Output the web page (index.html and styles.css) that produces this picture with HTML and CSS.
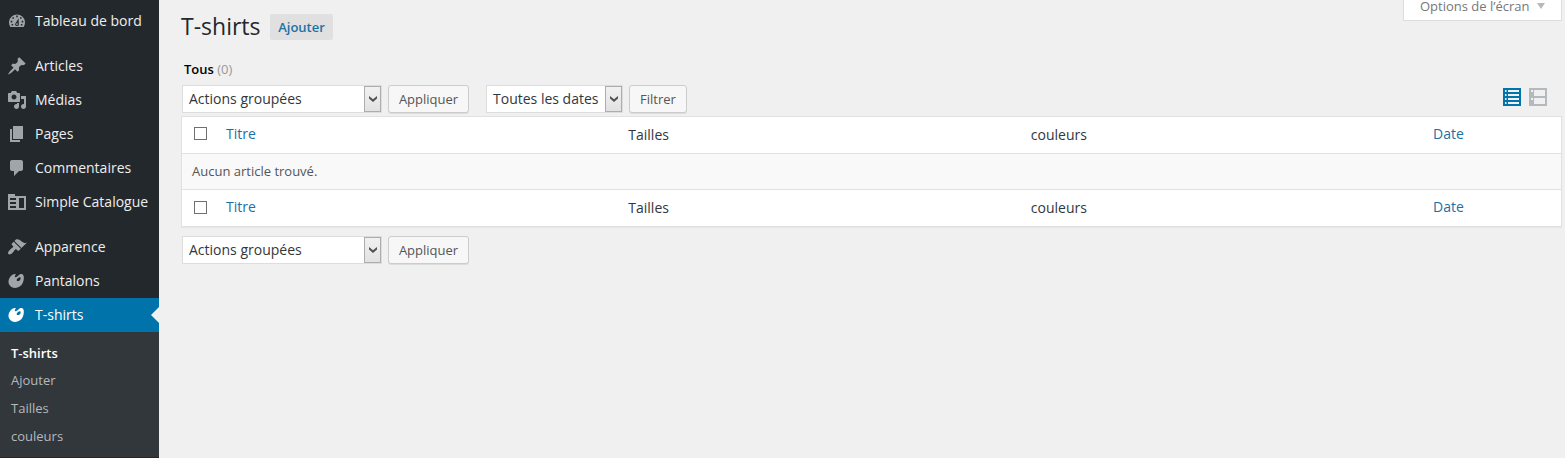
FILE: index.html
```html
<!DOCTYPE html>
<html lang="fr">
<head>
<meta charset="utf-8">
<title>T-shirts</title>
<link rel="stylesheet" href="styles.css">
</head>
<body>
<nav class="sidebar">
  <a class="item"><svg class="icon" viewBox="0 0 20 20"><path fill-rule="evenodd" d="M3.4 16h13.2A8 8 0 1 0 3.4 16zM9.2 4.6h1.6v1.6H9.2zM5.4 6.2H7v1.6H5.4zM13 6.2h1.6v1.6H13zM3.7 9.8h1.6v1.6H3.7zM14.7 9.8h1.6v1.6h-1.6zM4.6 13h1.6v1.4H4.6zM13.8 13h1.6v1.4h-1.6zM11.6 7.3l.2 5.7a1.8 1.8 0 1 1-3.4-.6zM10 12.2a.9.9 0 1 0 0 1.8.9.9 0 0 0 0-1.8z"/></svg>Tableau de bord</a>
  <a class="item spaced"><svg class="icon" viewBox="0 0 20 20"><path d="M10.44 3.02l1.82-1.82 6.36 6.35-1.83 1.82c-1.05-.68-2.48-.57-3.41.36l-.75.75c-.92.93-1.04 2.35-.35 3.41l-1.83 1.82-2.41-2.41-2.8 2.79c-.42.42-3.38 2.71-3.8 2.29s1.86-3.39 2.28-3.81l2.79-2.79L4.1 9.36l1.83-1.82c1.05.69 2.48.57 3.4-.36l.75-.75c.93-.92 1.05-2.35.36-3.41z"/></svg>Articles</a>
  <a class="item"><svg class="icon" viewBox="0 0 20 20"><path fill-rule="evenodd" d="M13 11V4c0-.55-.45-1-1-1h-1.67L9 1H5L3.67 3H2c-.55 0-1 .45-1 1v7c0 .55.45 1 1 1h10c.55 0 1-.45 1-1zM7 4.5c1.38 0 2.5 1.12 2.5 2.5S8.38 9.5 7 9.5 4.5 8.38 4.5 7 5.62 4.5 7 4.5zM14 6h5v10.5c0 1.38-1.12 2.5-2.5 2.5S14 17.88 14 16.5s1.12-2.5 2.5-2.5c.17 0 .34.02.5.05V9h-3V6zm-4 8.05V13h2v3.5c0 1.38-1.12 2.5-2.5 2.5S7 17.88 7 16.5 8.12 14 9.5 14c.17 0 .34.02.5.05z"/></svg>Médias</a>
  <a class="item"><svg class="icon" viewBox="0 0 20 20"><path d="M6 15V2h10v13H6zm-1 1h8v2H3V5h2v11z"/></svg>Pages</a>
  <a class="item"><svg class="icon" viewBox="0 0 20 20"><path d="M5 2h9c1.1 0 2 .9 2 2v7c0 1.1-.9 2-2 2h-2l-5 5v-5H5c-1.1 0-2-.9-2-2V4c0-1.1.9-2 2-2z"/></svg>Commentaires</a>
  <a class="item"><svg class="icon" viewBox="0 0 20 20"><path fill-rule="evenodd" d="M1 2h7v2h11v14H1zM3 6v2h6V6zM3 10v2h6v-2zM3 14v2h6v-2zM12 6v10h5V6z"/></svg>Simple Catalogue</a>
  <a class="item spaced"><svg class="icon" viewBox="0 0 20 20"><path d="M14.48 11.06L7.41 3.99l1.5-1.5c.5-.56 2.3-.47 3.51.32 1.21.8 1.43 1.28 2.91 2.1 1.18.64 2.45 1.26 4.45.85zm-.71.71L6.7 4.7 4.93 6.47c-.39.39-.39 1.02 0 1.41l1.06 1.06c.39.39.39 1.03 0 1.42-.6.6-1.43 1.11-2.21 1.69-.35.26-.7.53-1.01.84C1.43 14.23.4 16.08 1.4 17.07c.99 1 2.84-.03 4.18-1.36.31-.31.58-.66.85-1.02.57-.78 1.08-1.61 1.69-2.21.39-.39 1.02-.39 1.41 0l1.06 1.06c.39.39 1.02.39 1.41 0z"/></svg>Apparence</a>
  <a class="item"><svg class="icon" viewBox="0 0 20 20"><path fill-rule="evenodd" d="M8.55 3.06c1.01.34-1.95 2.01-.1 3.13 1.04.63 3.31-2.22 4.45-2.86.97-.54 2.67-.65 3.53 1.23 1.09 2.38.14 8.57-3.79 11.06-3.97 2.5-8.97 1.23-10.7-2.66-2.01-4.53 3.12-11.09 6.61-9.9zm1.21 6.45c.73 1.64 4.7-.5 3.79-2.8-.59-1.49-4.48 1.25-3.79 2.8z"/></svg>Pantalons</a>
  <a class="item current"><svg class="icon" viewBox="0 0 20 20"><path fill-rule="evenodd" d="M8.55 3.06c1.01.34-1.95 2.01-.1 3.13 1.04.63 3.31-2.22 4.45-2.86.97-.54 2.67-.65 3.53 1.23 1.09 2.38.14 8.57-3.79 11.06-3.97 2.5-8.97 1.23-10.7-2.66-2.01-4.53 3.12-11.09 6.61-9.9zm1.21 6.45c.73 1.64 4.7-.5 3.79-2.8-.59-1.49-4.48 1.25-3.79 2.8z"/></svg>T-shirts</a>
  <div class="submenu">
    <a class="active">T-shirts</a><a>Ajouter</a><a>Tailles</a><a>couleurs</a>
  </div>
</nav>
<main class="content">
  <header class="top">
    <h1>T-shirts</h1>
    <a class="add">Ajouter</a>
    <div class="options">Options de l’écran<svg class="tri" viewBox="0 0 8 6"><path d="M0 0h8L4 6z"/></svg></div>
  </header>
  <div class="filters"><b>Tous</b> (0)</div>
  <div class="toolbar">
    <div class="select actions"><span>Actions groupées</span><i class="drop"><svg viewBox="0 0 8 6"><path d="M0 0l4 3.2L8 0v2.5L4 6 0 2.5z"/></svg></i></div>
    <a class="button apply">Appliquer</a>
    <div class="select dates"><span>Toutes les dates</span><i class="drop"><svg viewBox="0 0 8 6"><path d="M0 0l4 3.2L8 0v2.5L4 6 0 2.5z"/></svg></i></div>
    <a class="button filter">Filtrer</a>
    <div class="views">
      <svg class="view on" viewBox="0 0 18 18"><path fill-rule="evenodd" d="M0 0h18v18H0zM2 2v2h1.5V2zM5 2v2h11V2zM2 6v2h1.5V6zM5 6v2h11V6zM2 10v2h1.5v-2zM5 10v2h11v-2zM2 14v2h1.5v-2zM5 14v2h11v-2z"/></svg>
      <svg class="view" viewBox="0 0 18 18"><path fill-rule="evenodd" d="M0 0h18v18H0zM2 2v2h2V2zM5 2v6h11V2zM2 10v2h2v-2zM5 10v6h11v-6z"/></svg>
    </div>
  </div>
  <section class="table">
    <div class="row head"><i class="check"></i><a>Titre</a><span>Tailles</span><span>couleurs</span><a>Date</a></div>
    <div class="empty">Aucun article trouvé.</div>
    <div class="row foot"><i class="check"></i><a>Titre</a><span>Tailles</span><span>couleurs</span><a>Date</a></div>
  </section>
  <div class="toolbar bottom">
    <div class="select actions"><span>Actions groupées</span><i class="drop"><svg viewBox="0 0 8 6"><path d="M0 0l4 3.2L8 0v2.5L4 6 0 2.5z"/></svg></i></div>
    <a class="button apply">Appliquer</a>
  </div>
</main>
</body>
</html>
```
FILE: styles.css
```css
* { box-sizing: border-box; }
body {
  margin: 0;
  height: 458px;
  display: flex;
  overflow: hidden;
  background: #f0f0f0;
  color: #32373c;
  font: 14px/20px "Open Sans", sans-serif;
}
.sidebar { width: 159px; flex: none; padding-top: 4px; background: #23282d; }
.item {
  height: 34px;
  display: flex;
  align-items: center;
  gap: 8px;
  padding-left: 7px;
  color: #eee;
  white-space: nowrap;
}
.spaced { margin-top: 11px; }
.icon { width: 20px; height: 20px; flex: none; fill: #a0a5aa; }
.current { position: relative; background: #0073aa; color: #fff; }
.current .icon { fill: #fff; }
.current::after {
  content: "";
  position: absolute;
  right: 0;
  top: 9px;
  border: 8px solid transparent;
  border-left: 0;
  border-right-color: #f0f0f0;
}
.submenu { height: 125px; padding: 7.6px 0 0 11px; background: #32373c; font-size: 13px; }
.submenu a { display: block; height: 27.7px; line-height: 27.7px; color: #b4b9be; }
.submenu .active { color: #fff; font-weight: 600; }
.content { flex: 1; min-width: 0; padding: 0 3px 0 22px; }
.top { display: flex; height: 60px; align-items: flex-start; }
h1 { margin: 12px 0 0; width: 89px; font-size: 23px; font-weight: 400; line-height: 29px; color: #23282d; white-space: nowrap; }
.add {
  margin-top: 14px;
  width: 63px;
  height: 26px;
  border-radius: 2px;
  background: #e0e0e0;
  color: #2271a4;
  font-size: 13px;
  font-weight: 600;
  line-height: 26px;
  text-align: center;
}
.options {
  display: flex;
  align-items: flex-start;
  gap: 7px;
  margin-left: auto;
  width: 159px;
  height: 21px;
  padding-left: 16px;
  border: 1px solid #ddd;
  border-top: 0;
  background: #fff;
  color: #777;
  font-size: 13px;
  line-height: 13px;
  white-space: nowrap;
}
.tri { width: 8px; height: 6px; margin-top: 3px; fill: #b4b9be; }
.filters { height: 25px; padding-left: 3px; color: #999; font-size: 13px; line-height: 19px; }
.filters b { color: #000; font-weight: 600; }
.toolbar { display: flex; height: 28px; margin: 0 0 3px 1px; }
.select { display: flex; height: 28px; border: 1px solid #ddd; background: #fff; line-height: 26px; }
.select span { flex: 1; padding-left: 6px; white-space: nowrap; }
.actions { width: 200px; }
.dates { width: 137px; margin-left: 17px; }
.drop {
  display: flex;
  align-items: center;
  justify-content: center;
  width: 17px;
  border: 1px solid #adadad;
  background: linear-gradient(#f1f1f1, #e2e2e2);
}
.drop svg { width: 8px; height: 6px; fill: #505050; }
.button {
  height: 28px;
  border: 1px solid #ccc;
  border-radius: 3px;
  background: #f7f7f7;
  box-shadow: 0 1px 0 #ddd;
  color: #555;
  font-size: 13px;
  line-height: 27px;
  text-align: center;
}
.apply { width: 81px; margin-left: 6px; }
.filter { width: 58px; margin-left: 6px; }
.views { display: flex; gap: 8px; margin: 3px 15px 0 auto; }
.view { width: 18px; height: 18px; fill: #b4b9be; }
.on { fill: #0073aa; }
.table { height: 111px; border: 1px solid #e1e1e1; background: #fff; box-shadow: 0 1px 1px rgba(0, 0, 0, .04); }
.row { display: grid; grid-template-columns: 44px 402.3px 402.5px 402.3px 1fr; height: 36px; line-height: 35px; }
.row a { color: #1b6fa5; line-height: 33px; }
.check { width: 13px; height: 13px; margin: 10px 0 0 12px; border: 1px solid #707070; background: #fff; }
.foot .check { margin-top: 11px; }
.empty { height: 37px; padding-left: 10px; border: solid #e1e1e1; border-width: 1px 0; background: #f9f9f9; color: #555; font-size: 13px; line-height: 35px; }
.bottom { margin-top: 9px; }
```
